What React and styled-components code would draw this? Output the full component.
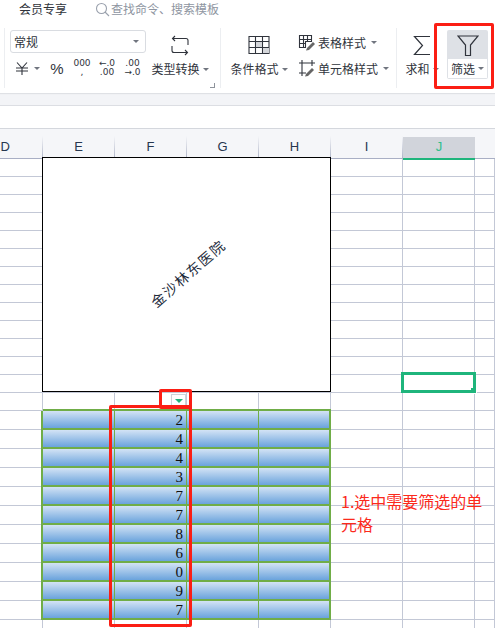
import React from "react";
import styled, { createGlobalStyle } from "styled-components";

const Global = createGlobalStyle`
  html, body { margin: 0; padding: 0; background: #fff; overflow: hidden; }
  body { font-family: "Noto Sans CJK SC", "Noto Sans", sans-serif; font-size: 12px; color: #30343c; }
  * { box-sizing: border-box; }
`;

const Page = styled.div`
  position: relative;
  width: 495px;
  height: 628px;
  overflow: hidden;
`;

/* top bar */
const TopBar = styled.div`
  height: 27px;
  display: flex;
  align-items: center;
  padding: 0 0 9px 19px;
  font-size: 12px;
  line-height: 18px;
`;
const TabLabel = styled.span`
  color: #2f333b;
  width: 76px;
`;
const Search = styled.span`
  display: flex;
  align-items: center;
  gap: 1px;
  color: #8e95a1;
`;

/* ribbon */
const Ribbon = styled.div`
  height: 66px;
  display: flex;
  align-items: stretch;
  padding: 1px 0 5px 4px;
  box-shadow: 0 1px 1px #dfe1e5;
  position: relative;
`;
const Group = styled.div`
  width: ${(p) => p.$w}px;
  position: relative;
  display: flex;
  gap: ${(p) => p.$gap || 0}px;
  padding-left: ${(p) => p.$pl || 0}px;
  border-left: 1px solid #eceef1;
`;
const NumberCol = styled.div`
  width: 136px;
  display: flex;
  flex-direction: column;
  padding-top: 2px;
`;
const Select = styled.div`
  height: 23px;
  border: 1px solid #d9dce1;
  border-radius: 3px;
  display: flex;
  align-items: center;
  justify-content: space-between;
  padding: 0 6px 0 3px;
  font-size: 12px;
  color: #30343c;
`;
const Caret = styled.span`
  display: inline-block;
  width: 0;
  height: 0;
  border-left: 3px solid transparent;
  border-right: 3px solid transparent;
  border-top: 3px solid #70757f;
  margin-left: ${(p) => p.$ml ?? 3}px;
  flex: none;
`;
const FormatRow = styled.div`
  display: flex;
  align-items: center;
  height: 27px;
  padding: 3px 0 0 3px;
`;
const Glyph = styled.span`
  display: flex;
  align-items: center;
  justify-content: center;
  width: ${(p) => p.$w}px;
  font-size: ${(p) => p.$size || 12}px;
  line-height: 1;
  color: #30343c;
  font-family: "Liberation Sans", sans-serif;
`;
const Stack = styled.span`
  display: flex;
  flex-direction: column;
  align-items: center;
  width: ${(p) => p.$w}px;
  font-family: "DejaVu Sans", sans-serif;
  font-size: 9px;
  line-height: 9px;
  color: #30343c;
  white-space: nowrap;
`;
const BigButton = styled.div`
  width: ${(p) => p.$w}px;
  display: flex;
  flex-direction: column;
  align-items: center;
  padding-top: 7px;
  font-size: 12px;
  line-height: 18px;
  white-space: nowrap;
`;
const BigIcon = styled.div`
  height: 21px;
  margin-bottom: 4px;
  display: flex;
`;
const BigLabel = styled.div`
  display: flex;
  align-items: center;
  color: #30343c;
`;
const Launcher = styled.span`
  position: absolute;
  right: 5px;
  bottom: 0;
  width: 5px;
  height: 5px;
  border-right: 1px solid #8f949c;
  border-bottom: 1px solid #8f949c;
`;
const StyleCol = styled.div`
  display: flex;
  flex-direction: column;
  gap: 8px;
  padding-top: 5px;
`;
const StyleRow = styled.div`
  display: flex;
  align-items: center;
  gap: 2px;
  height: 18px;
  white-space: nowrap;
`;
const FilterButton = styled.div`
  width: 41px;
  height: 49px;
  margin: 2px 0 0 5px;
  background: #dee1e6;
  border-radius: 2px;
  display: flex;
  flex-direction: column;
  align-items: center;
  padding-top: 5px;
`;
const FilterLabel = styled.div`
  margin-top: 3px;
  width: 39px;
  height: 19px;
  background: #fff;
  display: flex;
  align-items: center;
  justify-content: center;
  line-height: 18px;
  color: #30343c;
`;

/* strip below ribbon */
const Strip = styled.div`
  height: 12px;
  margin-top: 1px;
  background: #f3f4f7;
  border-bottom: 1px solid #dcdee3;
`;
const FormulaBar = styled.div`
  height: 23px;
  background: #fff;
  border-bottom: 1px solid #d4d7dd;
`;

/* sheet */
const HeaderRow = styled.div`
  height: 30px;
  display: grid;
  grid-template-columns: 43px repeat(6, 72px) 20px;
  background: #f5f6f9;
  border-bottom: 1px solid #a9afc5;
`;
const HeaderCell = styled.div`
  display: flex;
  align-items: flex-end;
  position: relative;
  padding-bottom: ${(p) => (p.$active ? 1 : 2)}px;
  margin-bottom: ${(p) => (p.$active ? -1 : 0)}px;
  margin-top: ${(p) => (p.$active ? 8 : 0)}px;
  font-family: "Liberation Sans", sans-serif;
  font-size: 13px;
  line-height: 20px;
  color: ${(p) => (p.$active ? "#2fbf8c" : "#26364f")};
  background: ${(p) => (p.$active ? "#d1d4db" : "transparent")};
  border-bottom: ${(p) => (p.$active ? "2px solid #1fb57c" : "none")};
  border-right: ${(p) => (p.$plain ? "none" : "1px solid transparent")};
  border-image: ${(p) =>
    p.$plain ? "none" : "linear-gradient(to bottom, #f5f6f9 25%, #aab0c4) 1"};
  justify-content: ${(p) => (p.$end ? "flex-end" : "center")};
  padding-right: ${(p) => (p.$end ? 32 : 0)}px;
`;
const Row = styled.div`
  height: ${(p) => p.$h}px;
  display: grid;
  grid-template-columns: 43px repeat(6, 72px) 20px;
`;
const Cell = styled.div`
  border-bottom: ${(p) => (p.$open ? "none" : "1px solid #c3c8d6")};
  border-right: 1px solid #c3c8d6;
`;
const BandCell = styled.div`
  position: relative;
  display: flex;
  align-items: center;
  justify-content: flex-end;
  padding: 2px 3px 0 0;
  background: linear-gradient(to bottom, #d3e3f5, #6aa3dc);
  border-bottom: 2px solid #70ad47;
  border-right: ${(p) => (p.$right ? 2 : 1)}px solid #70ad47;
  font-family: "Liberation Serif", serif;
  font-size: 15px;
  line-height: 1;
  color: #111;
  box-shadow: ${(p) =>
    [
      p.$left ? "-2px 0 0 #70ad47" : "",
      p.$top ? "0 -2px 0 #70ad47" : "",
    ]
      .filter(Boolean)
      .join(",") || "none"};
`;

/* things lying over the sheet */
const Picture = styled.div`
  position: absolute;
  left: 42px;
  top: 157px;
  width: 289px;
  height: 235px;
  background: #fff;
  border: 1px solid #000;
  display: flex;
  align-items: center;
  justify-content: center;
`;
const PictureText = styled.div`
  transform: rotate(-41deg);
  font-size: 14px;
  letter-spacing: 1.6px;
  line-height: 18px;
  color: #1c2a3a;
  white-space: nowrap;
  margin: -3px 0 0 2px;
`;
const FilterHandle = styled.div`
  position: absolute;
  left: 171px;
  top: 394px;
  width: 15px;
  height: 12px;
  background: #fff;
  border: 1px solid #cfd2d9;
  display: flex;
  align-items: center;
  justify-content: center;
`;
const GreenArrow = styled.span`
  width: 0;
  height: 0;
  margin-top: 2px;
  border-left: 4px solid transparent;
  border-right: 4px solid transparent;
  border-top: 4px solid #1fb57c;
`;
const Selection = styled.div`
  position: absolute;
  left: 401px;
  top: 372px;
  width: 75px;
  height: 21px;
  border: 3px solid #1fb57c;
`;
const SelectionDot = styled.span`
  position: absolute;
  right: -4px;
  bottom: -4px;
  width: 6px;
  height: 6px;
  background: #1fb57c;
  border: 1px solid #fff;
  border-top: none;
  border-left: none;
`;
const Mark = styled.div`
  position: absolute;
  left: ${(p) => p.$x}px;
  top: ${(p) => p.$y}px;
  width: ${(p) => p.$w}px;
  height: ${(p) => p.$h}px;
  border: 3px solid #fb1e14;
  border-radius: 2px;
`;
const Note = styled.div`
  position: absolute;
  left: 341px;
  top: 490px;
  width: 146px;
  font-size: 16px;
  line-height: 23px;
  color: #fb2a1c;
`;

const Icon = ({ w, h, children, sw = 1.1 }) => (
  <svg width={w} height={h} viewBox={`0 0 ${w} ${h}`} fill="none" stroke="#30343c" strokeWidth={sw}>
    {children}
  </svg>
);

const HEIGHTS = [...Array(14).fill(18)];
const VALUES = [2, 4, 4, 3, 7, 7, 8, 6, 0, 9, 7];
const COLS = ["D", "E", "F", "G", "H", "I", "J"];

const PlainRow = ({ h, open }) => (
  <Row $h={h}>
    {Array.from({ length: 8 }).map((_, i) => (
      <Cell key={i} $open={open} />
    ))}
  </Row>
);

export default function App() {
  return (
    <Page>
      <Global />
      <TopBar>
        <TabLabel>会员专享</TabLabel>
        <Search>
          <svg width="15" height="15" viewBox="0 0 15 15" fill="none" stroke="#9aa1ad" strokeWidth="1.1">
            <circle cx="6.5" cy="6.5" r="5" />
            <path d="M10 10l4 4" />
          </svg>
          查找命令、搜索模板
        </Search>
      </TopBar>

      <Ribbon>
        <Group $w={216} $pl={5} $gap={5}>
          <NumberCol>
            <Select>
              常规
              <Caret />
            </Select>
            <FormatRow>
              <Glyph $w={18}>
                <Icon w={14} h={14}>
                  <path d="M2 1.5l5 5.5 5-5.5M1 7h12M1 10h12M7 7v7" />
                </Icon>
              </Glyph>
              <Caret $ml={3} />
              <Glyph $w={34} $size={15}>%</Glyph>
              <Stack $w={16}>
                <span>000</span>
                <span>,</span>
              </Stack>
              <Stack $w={34}>
                <span>←.0</span>
                <span>.00</span>
              </Stack>
              <Stack $w={17}>
                <span>.00</span>
                <span>→.0</span>
              </Stack>
            </FormatRow>
          </NumberCol>
          <BigButton $w={58}>
            <BigIcon>
              <Icon w={20} h={21}>
                <path d="M5 1L2.500 3.500 5 6M2.500 3.500H16q2 0 2 2v4.500M15 20l2.500-2.500L15 15M17.500 17.500H4q-2 0-2-2v-4.500" />
              </Icon>
            </BigIcon>
            <BigLabel>
              类型转换
              <Caret />
            </BigLabel>
          </BigButton>
          <Launcher />
        </Group>

        <Group $w={176} $pl={7} $gap={8}>
          <BigButton $w={62}>
            <BigIcon>
              <Icon w={22} h={20}>
                <path d="M1 1.500h20v17H1zM1 6.500h20M1 12.500h20M7.500 1.500v17M14.500 1.500v17" />
                <path d="M8 7h6v5H8zM15 13h6v5h-6z" fill="#d4d6da" stroke="none" />
              </Icon>
            </BigIcon>
            <BigLabel>
              条件格式
              <Caret />
            </BigLabel>
          </BigButton>
          <StyleCol>
            <StyleRow>
              <Icon w={18} h={18}>
                <path d="M1.500 2.500h12v6h-6v6h-6zM1.500 6.500h12M1.500 10.500h6M5.500 2.500v12M9.500 2.500v6" />
                <path d="M9 15l6-6 2 2-6 6-3 .5z" fill="#666" stroke="none" />
              </Icon>
              表格样式
              <Caret />
            </StyleRow>
            <StyleRow>
              <Icon w={18} h={18}>
                <path d="M4 1v16M14 1v6M1 4h16M1 14h7" />
                <path d="M8 15l6-6 2 2-6 6-3 .5z" fill="#666" stroke="none" />
              </Icon>
              单元格样式
              <Caret />
            </StyleRow>
          </StyleCol>
        </Group>

        <Group $w={46} $pl={5}>
          <BigButton $w={40}>
            <BigIcon>
              <Icon w={18} h={21} sw={1.2}>
                <path d="M17 1.500H1.500l8 9-8 9H17" />
              </Icon>
            </BigIcon>
            <BigLabel>
              求和
              <Caret />
            </BigLabel>
          </BigButton>
        </Group>

        <FilterButton>
          <Icon w={22} h={21} sw={1.2}>
            <path d="M1 1h20L13.500 10v10.500h-5V10z" />
          </Icon>
          <FilterLabel>
            筛选
            <Caret />
          </FilterLabel>
        </FilterButton>
      </Ribbon>

      <Strip />
      <FormulaBar />

      <HeaderRow>
        {COLS.map((c, i) => (
          <HeaderCell key={c} $end={i === 0} $active={c === "J"} $plain={c === "J"}>
            {c}
          </HeaderCell>
        ))}
      </HeaderRow>

      {HEIGHTS.map((h, i) => (
        <PlainRow key={i} h={h} />
      ))}

      {VALUES.map((v, i) => (
        <Row key={i} $h={19}>
          <Cell />
          <BandCell $left $top={i === 0} />
          <BandCell $top={i === 0}>{v}</BandCell>
          <BandCell $top={i === 0} />
          <BandCell $right $top={i === 0} />
          <Cell />
          <Cell />
          <Cell />
        </Row>
      ))}
      <PlainRow h={10} open />

      <Picture>
        <PictureText>金沙林东医院</PictureText>
      </Picture>
      <FilterHandle>
        <GreenArrow />
      </FilterHandle>
      <Selection>
        <SelectionDot />
      </Selection>
      <Note>1.选中需要筛选的单元格</Note>

      <Mark $x={434} $y={23} $w={60} $h={66} />
      <Mark $x={159} $y={389} $w={33} $h={20} />
      <Mark $x={109} $y={405} $w={83} $h={222} />
    </Page>
  );
}
